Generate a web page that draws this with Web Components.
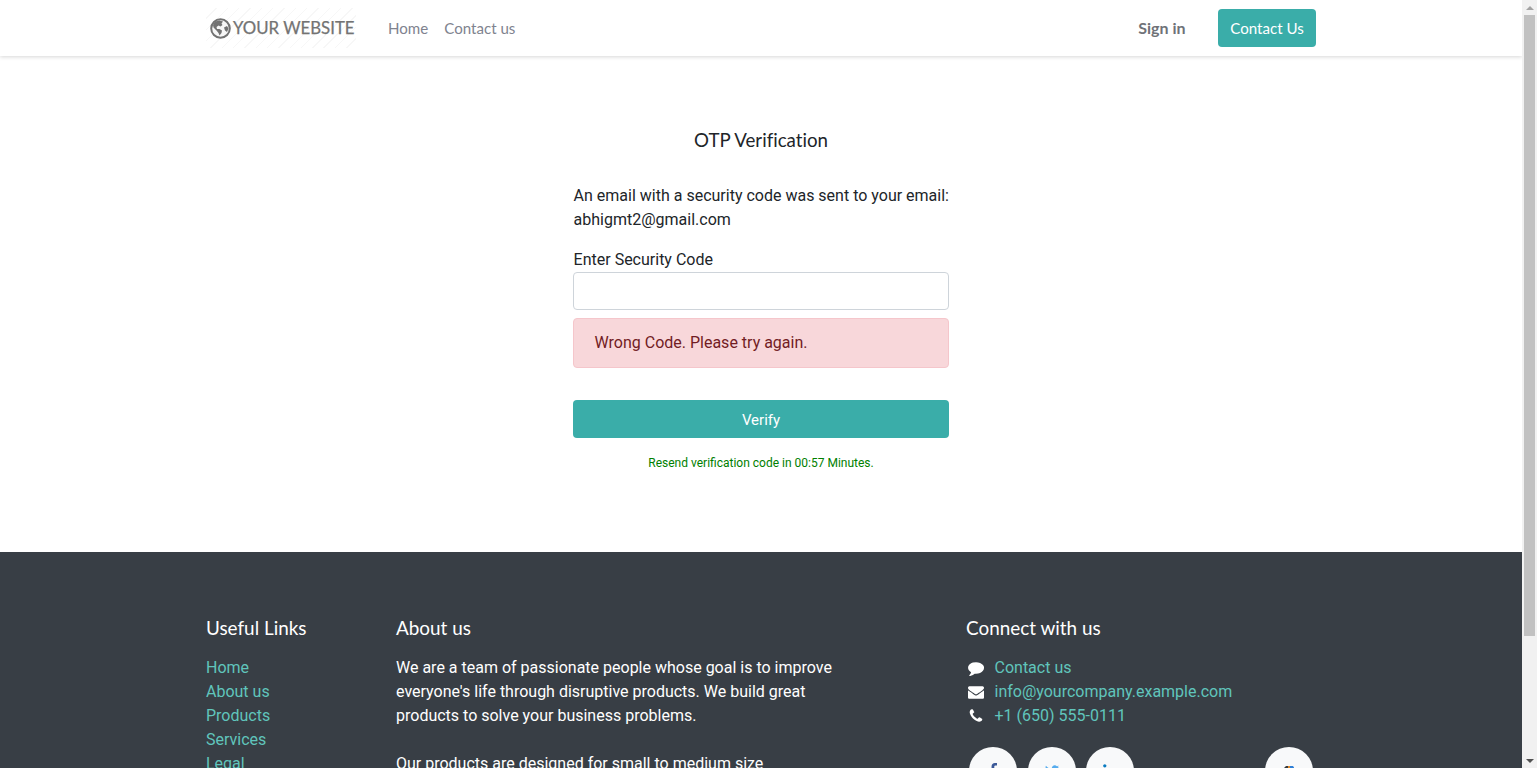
<!DOCTYPE html>
<html lang="en">
<head>
<meta charset="utf-8">
<title>OTP Verification</title>
<style>
  html, body { margin: 0; height: 100%; overflow: hidden; }
  body { display: flex; font-family: Roboto, "Liberation Sans", sans-serif; font-size: 16px; line-height: 24px; color: #212529; background: #fff; }
  .page { flex: 1; min-width: 0; height: 768px; overflow: hidden; }
</style>
</head>
<body>
  <div class="page">
    <site-nav></site-nav>
    <otp-panel email="abhigmt2@gmail.com"></otp-panel>
    <site-footer></site-footer>
  </div>
  <page-scrollbar></page-scrollbar>

<script>
const ICONS = {
  comment: "M1792 896q0 174-120 321.5t-326 233-450 85.5q-70 0-145-8-185 164-430 227-57 16-131 25-19 2-34-10.5t-20-33.5v-1q-3-4-.5-12t2-10 4.5-9.5l6-9 7-8.5 8-9q7-8 31-34.5t34.5-38 31-39.5 32.5-51 27-59 26-76q-157-89-247.5-220t-90.5-281q0-130 71-248.5t191-204.5 286-136.5 348-50.5q244 0 450 85.5t326 233 120 321.5z",
  envelope: "M1792 710v794q0 66-47 113t-113 47h-1472q-66 0-113-47t-47-113v-794q44 49 101 87 362 246 497 345 57 42 92.5 65.5t94.5 48 110 24.5h2q51 0 110-24.5t94.5-48 92.5-65.5q170-123 498-345 57-39 100-87zm0-294q0 79-49 151t-122 123q-376 261-468 325-10 7-42.5 30.5t-54 38-52 32.5-57.5 27-50 9h-2q-23 0-50-9t-57.5-27-52-32.5-54-38-42.5-30.5q-91-64-262-182.5t-205-142.5q-62-42-117-115.5t-55-136.5q0-78 41.5-130t118.5-52h1472q65 0 112.5 47t47.5 113z",
  phone: "M1600 1240q0 27-10 70.5t-21 68.5q-21 50-122 106-94 51-186 51-27 0-53-3.5t-57.5-12.5-47-14.5-55.5-20.5-49-18q-98-35-175-83-127-79-264-216t-216-264q-48-77-83-175-3-9-18-49t-20.5-55.5-14.5-47-12.5-57.5-3.5-53q0-92 51-186 56-101 106-122 25-11 68.5-21t70.5-10q14 0 21 3 18 6 53 76 11 19 30 54t35 63.5 31 53.5q3 4 17.5 25t21.5 35.5 7 28.5q0 20-28.5 50t-62 55-62 53-28.5 46q0 9 5 22.5t8.5 20.5 14 24 11.5 19q76 137 174 235t235 174q2 1 19 11.5t24 14 20.5 8.5 22.5 5q18 0 46-28.5t53-62 55-62 50-28.5q14 0 28.5 7t35.5 21.5 25 17.5q25 15 53.5 31t63.5 35 54 30q70 35 76 53 3 7 3 21z",
  facebook: "M1343 12v264h-157q-86 0-116 36t-30 108v189h293l-39 296h-254v759h-306v-759h-255v-296h255v-218q0-186 104-288.5t277-102.5q147 0 228 12z",
  twitter: "M1684 408q-67 98-162 167 1 14 1 42 0 130-38 259.5t-115.5 248.5-184.5 210.5-258 146-323 54.5q-271 0-496-145 35 4 78 4 225 0 401-138-105-2-188-64.5t-114-159.5q33 5 61 5 43 0 85-11-112-23-185.5-111.5t-73.5-205.5v-4q68 38 146 41-66-44-105-115t-39-154q0-88 44-163 121 149 294.5 238.5t371.5 99.5q-8-38-8-74 0-134 94.5-228.5t228.5-94.5q140 0 236 102 109-21 205-78-37 115-142 178 93-10 186-50z",
  linkedin: "M477 625v991h-330v-991h330zm21-306q1 73-50.5 122t-135.5 49h-2q-82 0-132-49t-50-122q0-74 51.5-122.5t134.5-48.5 133 48.5 51 122.5zm1166 729v568h-329v-530q0-105-40.5-164.5t-126.5-59.5q-63 0-105.5 34.5t-63.5 85.5q-11 30-11 81v553h-329q2-399 2-647t-1-296l-1-48h329v144h-2q20-32 41-56t56.5-52 87-43.5 114.5-15.5q171 0 275 113.5t104 332.5z"
};

const fa = (name, w, color) =>
  `<svg width="${w}" height="${w}" viewBox="0 0 1792 1792" fill="${color}" aria-hidden="true"><path d="${ICONS[name]}"/></svg>`;

class SiteNav extends HTMLElement {
  constructor() {
    super();
    this.attachShadow({ mode: "open" });
  }

  connectedCallback() {
    this.shadowRoot.innerHTML = `
  <style>
    :host {
      display: block;
      position: relative;
      height: 56px;
      background: #fff;
      box-shadow: 0 1px 4px rgba(0, 0, 0, 0.16);
      font-family: Lato, "Liberation Sans", sans-serif;
      font-size: 15.1px;
      font-variant-ligatures: none;
    }
    .bar {
      width: 1110px;
      height: 56px;
      margin: 0 auto;
      display: flex;
      align-items: center;
    }
    .logo {
      width: 150px;
      height: 40px;
      box-sizing: border-box;
      padding-left: 4px;
      display: flex;
      align-items: center;
      gap: 2px;
      white-space: nowrap;
      color: #737373;
      font-size: 16.8px;
      font-weight: 400;
      -webkit-text-stroke: 0.25px #737373;
      background: repeating-linear-gradient(135deg, #fff 0 7px, #f7f7f7 7px 8px);
    }
    a { text-decoration: none; color: #80838f; }
    .links { display: flex; gap: 16px; margin-left: 32px; }
    .right { margin-left: auto; display: flex; align-items: center; }
    .sign { color: #6f7278; font-size: 16px; font-weight: 700; margin-right: 32.5px; }
    .cta {
      width: 98px;
      height: 38px;
      border-radius: 4px;
      background: #3aada9;
      color: #fff;
      display: flex;
      align-items: center;
      justify-content: center;
    }
  </style>
  <div class="bar">
    <div class="logo">
      <svg width="21" height="21" viewBox="0 0 21 21" aria-hidden="true">
        <circle cx="10.5" cy="10.5" r="9.3" fill="#f7f7f7" stroke="#737373" stroke-width="2"/>
        <path fill="#737373" d="M5 3.5 9.5 2.5 13 3.5 11.5 5.5 12.5 7 10.5 8.5 8.5 7.5 6.5 9 7 11 9.5 11 12 12.5 11.5 15 9.5 17.5 8.5 15 6.5 12.5 3.5 9.5 3 7zM14 9.5 17 8 18.5 10.5 17 14 15 12.5z"/>
      </svg>
      <span>YOUR WEBSITE</span>
    </div>
    <nav class="links"><a href="#">Home</a><a href="#">Contact us</a></nav>
    <div class="right">
      <a class="sign" href="#">Sign in</a>
      <a class="cta" href="#">Contact Us</a>
    </div>
  </div>
    `;
  }
}

class OtpPanel extends HTMLElement {
  constructor() {
    super();
    this.attachShadow({ mode: "open" });
  }

  connectedCallback() {
    const email = this.getAttribute("email");
    this.shadowRoot.innerHTML = `
  <style>
    :host {
      display: block;
      height: 496px;
      box-sizing: border-box;
      padding-top: 72px;
    }
    .wrap { width: 376px; margin: 0 auto; }
    h1 {
      margin: 0 0 32px;
      font: 400 18.7px/24px Lato, "Liberation Sans", sans-serif;
      font-variant-ligatures: none;
      text-align: center;
    }
    p { margin: 0 0 16px; padding-left: 0.6px; white-space: nowrap; }
    label { display: block; height: 24px; padding-left: 0.6px; }
    input {
      display: block;
      width: 100%;
      height: 38px;
      box-sizing: border-box;
      border: 1px solid #ced4da;
      border-radius: 4px;
      background: #fff;
    }
    .alert {
      margin-top: 8px;
      padding: 12px 20px 12px 20.5px;
      border: 1px solid #f5c6cb;
      border-radius: 4px;
      background: #f8d7da;
      color: #721c24;
    }
    button {
      display: block;
      width: 100%;
      height: 38px;
      margin-top: 32px;
      padding: 1px 0 0;
      border: 0;
      border-radius: 4px;
      background: #3aada9;
      color: #fff;
      font: inherit;
      font-size: 15px;
    }
    .resend {
      margin: 16px 0 0;
      padding: 0;
      font-size: 12px;
      line-height: 18px;
      text-align: center;
      color: #008000;
    }
  </style>
  <div class="wrap">
    <h1>OTP Verification</h1>
    <p>An email with a security code was sent to your email:<br>${email}</p>
    <label for="code">Enter Security Code</label>
    <input id="code" type="text">
    <div class="alert">Wrong Code. Please try again.</div>
    <button type="button">Verify</button>
    <p class="resend">Resend verification code in 00:57 Minutes.</p>
  </div>
    `;
  }
}

class SocialLink extends HTMLElement {
  constructor() {
    super();
    this.attachShadow({ mode: "open" });
  }

  connectedCallback() {
    const name = this.getAttribute("icon");
    const color = this.getAttribute("color");
    this.shadowRoot.innerHTML = `
  <style>
    :host {
      display: flex;
      flex: none;
      justify-content: center;
      align-items: center;
      width: 48px;
      height: 48px;
      border-radius: 50%;
      background: #f8f9fa;
    }
  </style>
  ${ICONS[name] ? fa(name, 16, color) : "<slot></slot>"}
    `;
  }
}

class SiteFooter extends HTMLElement {
  constructor() {
    super();
    this.attachShadow({ mode: "open" });
  }

  connectedCallback() {
    this.shadowRoot.innerHTML = `
  <style>
    :host {
      display: block;
      background: #383e45;
      color: #fff;
      height: 400px;
      box-sizing: border-box;
      padding-top: 64px;
    }
    .row {
      width: 1110px;
      margin: 0 auto;
      display: grid;
      grid-template-columns: 190px 570px 350px;
    }
    h2 {
      margin: 0 0 16px;
      font: 400 18.9px/24px Lato, "Liberation Sans", sans-serif;
      font-variant-ligatures: none;
    }
    a { color: #60c5bc; text-decoration: none; }
    ul { list-style: none; margin: 0; padding: 0; }
    .about p { margin: 0 0 24px; width: 445px; }
    .contact li { display: flex; align-items: center; height: 24px; }
    .ic { width: 28.5px; flex: none; display: flex; padding-left: 2px; box-sizing: border-box; }
    .social { display: flex; margin: 19px 0 0 3px; }
    .social social-link { margin-right: 10.5px; }
    .social social-link:last-child { margin: 0 0 0 120.5px; }
  </style>
  <div class="row">
    <section>
      <h2>Useful Links</h2>
      <ul>
        <li><a href="#">Home</a></li>
        <li><a href="#">About us</a></li>
        <li><a href="#">Products</a></li>
        <li><a href="#">Services</a></li>
        <li><a href="#">Legal</a></li>
      </ul>
    </section>
    <section class="about">
      <h2>About us</h2>
      <p>We are a team of passionate people whose goal is to improve everyone's life through disruptive products. We build great products to solve your business problems.</p>
      <p>Our products are designed for small to medium size companies willing to optimize their performance.</p>
    </section>
    <section class="contact">
      <h2>Connect with us</h2>
      <ul>
        <li><span class="ic">${fa("comment", 16, "#fff")}</span><a href="#">Contact us</a></li>
        <li><span class="ic">${fa("envelope", 16, "#fff")}</span><a href="#">info@yourcompany.example.com</a></li>
        <li><span class="ic">${fa("phone", 16, "#fff")}</span><a href="#">+1 (650) 555-0111</a></li>
      </ul>
      <div class="social">
        <social-link icon="facebook" color="#3b5998"></social-link>
        <social-link icon="twitter" color="#55acee"></social-link>
        <social-link icon="linkedin" color="#0a7bc1"></social-link>
        <social-link icon="other"><svg width="16" height="16" viewBox="0 0 16 16" aria-hidden="true"><path fill="#343a40" d="M2 6 5 3H8V16H2z"/><path fill="#e08a2c" d="M7 3H9V16H7z"/><path fill="#2f7fd6" d="M9 3H12L13 4.500V16H9z"/></svg></social-link>
      </div>
    </section>
  </div>
    `;
  }
}

class PageScrollbar extends HTMLElement {
  constructor() {
    super();
    this.attachShadow({ mode: "open" });
  }

  connectedCallback() {
    this.shadowRoot.innerHTML = `
  <style>
    :host {
      display: flex;
      flex-direction: column;
      flex: none;
      width: 15px;
      height: 768px;
      background: #f1f1f1;
    }
    .up, .down {
      flex: none;
      height: 15px;
      display: flex;
      justify-content: center;
      align-items: center;
    }
    .up i, .down i { width: 0; height: 0; border: 4px solid transparent; }
    .up i { border-bottom-color: #a3a3a3; border-top-width: 0; }
    .down i { border-top-color: #505050; border-bottom-width: 0; }
    .track { flex: 1; }
    .thumb { width: 11px; height: 621px; margin-left: 2px; background: #c1c1c1; }
  </style>
  <div class="up"><i></i></div>
  <div class="track"><div class="thumb"></div></div>
  <div class="down"><i></i></div>
    `;
  }
}

customElements.define("site-nav", SiteNav);
customElements.define("otp-panel", OtpPanel);
customElements.define("social-link", SocialLink);
customElements.define("site-footer", SiteFooter);
customElements.define("page-scrollbar", PageScrollbar);
</script>
</body>
</html>
